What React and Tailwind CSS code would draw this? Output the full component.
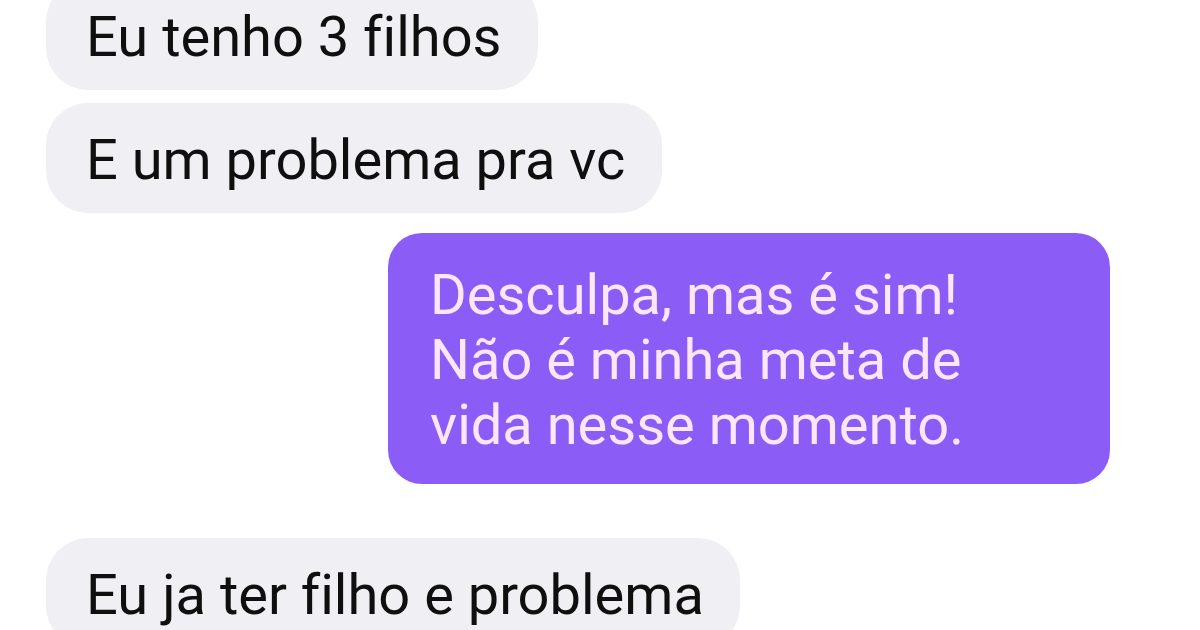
export default function App() {
  const font = { fontFamily: "Roboto, 'Noto Sans', Arial, sans-serif" };
  return (
    <div className="w-[1200px] h-[630px] bg-white overflow-hidden [font-variant-ligatures:none]" style={font}>
      <div className="flex flex-col -mt-5 pl-[46px] pr-[90px]">
        <div className="self-start bg-[#efeff4] rounded-[42px] pl-[40px] pr-[36px] pt-6 pb-5 text-[56px] leading-[66px] text-[#0f0f0f]">
          Eu tenho 3 filhos
        </div>
        <div className="self-start mt-[13px] bg-[#efeff4] rounded-[42px] pl-[40px] pr-[37px] pt-6 pb-5 text-[56px] leading-[66px] text-[#0f0f0f]">
          E um problema pra vc
        </div>
        <div className="self-end mt-[20px] w-[722px] bg-[#8b5cf6] rounded-[34px] pl-[42px] pr-6 pt-[30px] pb-[26px] text-[56px] leading-[65px] text-[#fbe6fa]">
          <div>Desculpa, mas é sim!</div>
          <div>Não é minha meta de</div>
          <div>vida nesse momento.</div>
        </div>
        <div className="self-start mt-[54px] bg-[#efeff4] rounded-[42px] pl-[40px] pr-[36px] pt-6 pb-5 text-[56px] leading-[66px] text-[#0f0f0f]">
          Eu ja ter filho e problema
        </div>
      </div>
    </div>
  );
}
